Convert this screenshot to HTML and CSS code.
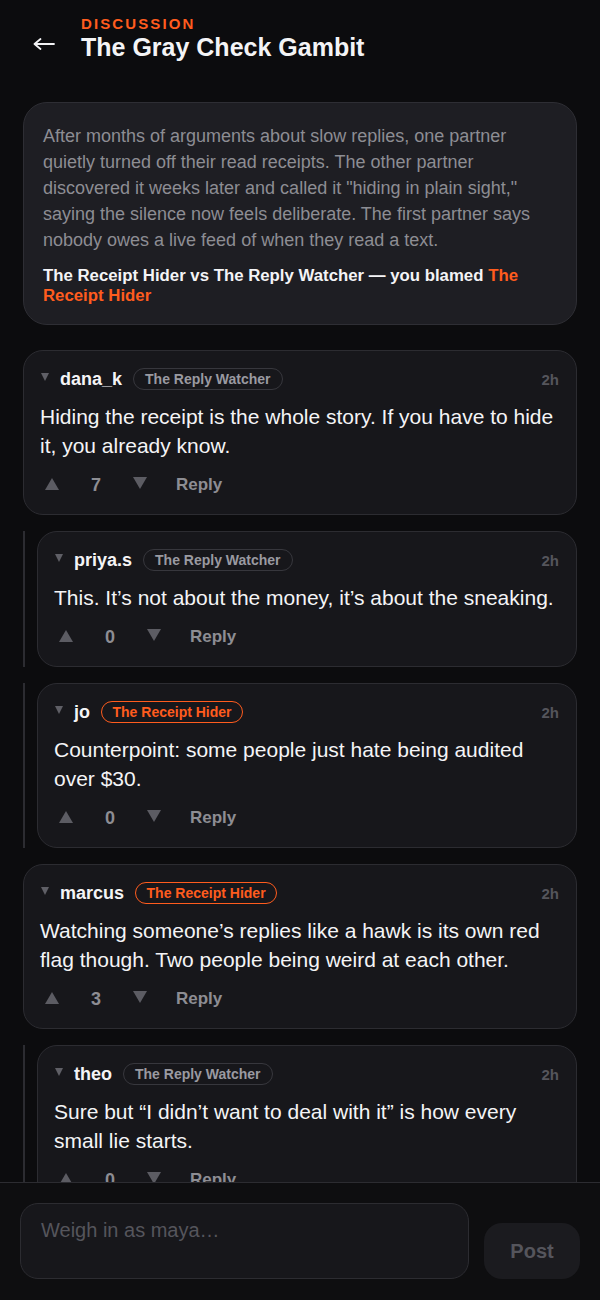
FILE: index.html
```html
<!DOCTYPE html>
<html lang="en">
<head>
<meta charset="utf-8">
<title>The Gray Check Gambit</title>
<link rel="stylesheet" href="styles.css">
</head>
<body>
<header class="top">
  <button class="back" aria-label="Back">
    <svg width="24" height="24" viewBox="0 0 24 24"><path d="M2.5 12 H22 M8.5 7 L2.5 12 L8.5 17" fill="none" stroke="#f2f2f4" stroke-width="1.8" stroke-linecap="round" stroke-linejoin="round"/></svg>
  </button>
  <div class="titles">
    <div class="eyebrow">DISCUSSION</div>
    <h1 class="title">The Gray Check Gambit</h1>
  </div>
</header>

<main class="feed">
  <section class="context">
    <p class="story">After months of arguments about slow replies, one partner quietly turned off their read receipts. The other partner discovered it weeks later and called it "hiding in plain sight," saying the silence now feels deliberate. The first partner says nobody owes a live feed of when they read a text.</p>
    <p class="verdict">The Receipt Hider vs The Reply Watcher — you blamed <span class="accent">The Receipt Hider</span></p>
  </section>

  <article class="comment">
    <div class="c-head">
      <span class="caret"></span>
      <span class="user">dana_k</span>
      <span class="badge">The Reply Watcher</span>
      <span class="time">2h</span>
    </div>
    <p class="c-body">Hiding the receipt is the whole story. If you have to hide it, you already know.</p>
    <div class="actions">
      <svg class="up" width="14" height="12" viewBox="0 0 14 12"><polygon points="7,0 14,12 0,12" /></svg>
      <span class="count">7</span>
      <svg class="down" width="14" height="12" viewBox="0 0 14 12"><polygon points="0,0 14,0 7,12" /></svg>
      <span class="reply">Reply</span>
    </div>
  </article>

  <div class="thread">
    <article class="comment">
      <div class="c-head">
        <span class="caret"></span>
        <span class="user">priya.s</span>
        <span class="badge">The Reply Watcher</span>
        <span class="time">2h</span>
      </div>
      <p class="c-body">This. It’s not about the money, it’s about the sneaking.</p>
      <div class="actions">
        <svg class="up" width="14" height="12" viewBox="0 0 14 12"><polygon points="7,0 14,12 0,12" /></svg>
        <span class="count">0</span>
        <svg class="down" width="14" height="12" viewBox="0 0 14 12"><polygon points="0,0 14,0 7,12" /></svg>
        <span class="reply">Reply</span>
      </div>
    </article>
  </div>

  <div class="thread">
    <article class="comment">
      <div class="c-head">
        <span class="caret"></span>
        <span class="user">jo</span>
        <span class="badge badge-hot">The Receipt Hider</span>
        <span class="time">2h</span>
      </div>
      <p class="c-body">Counterpoint: some people just hate being audited over $30.</p>
      <div class="actions">
        <svg class="up" width="14" height="12" viewBox="0 0 14 12"><polygon points="7,0 14,12 0,12" /></svg>
        <span class="count">0</span>
        <svg class="down" width="14" height="12" viewBox="0 0 14 12"><polygon points="0,0 14,0 7,12" /></svg>
        <span class="reply">Reply</span>
      </div>
    </article>
  </div>

  <article class="comment">
    <div class="c-head">
      <span class="caret"></span>
      <span class="user">marcus</span>
      <span class="badge badge-hot">The Receipt Hider</span>
      <span class="time">2h</span>
    </div>
    <p class="c-body">Watching someone’s replies like a hawk is its own red flag though. Two people being weird at each other.</p>
    <div class="actions">
      <svg class="up" width="14" height="12" viewBox="0 0 14 12"><polygon points="7,0 14,12 0,12" /></svg>
      <span class="count">3</span>
      <svg class="down" width="14" height="12" viewBox="0 0 14 12"><polygon points="0,0 14,0 7,12" /></svg>
      <span class="reply">Reply</span>
    </div>
  </article>

  <div class="thread">
    <article class="comment">
      <div class="c-head">
        <span class="caret"></span>
        <span class="user">theo</span>
        <span class="badge">The Reply Watcher</span>
        <span class="time">2h</span>
      </div>
      <p class="c-body">Sure but “I didn’t want to deal with it” is how every small lie starts.</p>
      <div class="actions">
        <svg class="up" width="14" height="12" viewBox="0 0 14 12"><polygon points="7,0 14,12 0,12" /></svg>
        <span class="count">0</span>
        <svg class="down" width="14" height="12" viewBox="0 0 14 12"><polygon points="0,0 14,0 7,12" /></svg>
        <span class="reply">Reply</span>
      </div>
    </article>
  </div>
</main>

<footer class="composer">
  <div class="input">Weigh in as maya…</div>
  <button class="post">Post</button>
</footer>
</body>
</html>
```

FILE: styles.css
```css
* { box-sizing: border-box; }

html, body {
  margin: 0;
  padding: 0;
  background: #0c0c0e;
  color: #f2f2f4;
  font-family: "Liberation Sans", Arial, sans-serif;
}

body {
  height: 1300px;
  overflow: hidden;
}

.top {
  display: flex;
  align-items: flex-start;
  padding: 14px 24px 0 32px;
}

.back {
  background: none;
  border: 0;
  padding: 0;
  width: 24px;
  height: 24px;
  margin-top: 18px;
  margin-right: 25px;
  display: flex;
}

.titles {
  display: flex;
  flex-direction: column;
}

.eyebrow {
  font-size: 15px;
  line-height: 18px;
  font-weight: 700;
  letter-spacing: 2.1px;
  color: #ff5c1e;
  margin-top: 1px;
}

.title {
  margin: 0;
  font-size: 25px;
  line-height: 28px;
  font-weight: 700;
  color: #f4f4f6;
}

.feed {
  display: flex;
  flex-direction: column;
  gap: 16px;
  padding: 41px 23px 0;
}

.context {
  background: #1e1e23;
  border: 1px solid #2e2e34;
  border-radius: 24px;
  padding: 20px 20px 18px 19px;
  margin-bottom: 9px;
}

.story {
  margin: 0;
  font-size: 18px;
  line-height: 26px;
  color: #8d8d93;
}

.verdict {
  margin: 13px 0 0;
  font-size: 16.8px;
  line-height: 20px;
  font-weight: 700;
  color: #f4f4f6;
}

.accent { color: #ff5c1e; }

.thread {
  border-left: 2px solid #2c2c31;
  padding-left: 12px;
}

.comment {
  background: #17171b;
  border: 1px solid #2c2c31;
  border-radius: 20px;
  padding: 16px 17px 16px 16px;
}

.c-head {
  display: flex;
  align-items: center;
  height: 24px;
}

.caret {
  width: 0;
  height: 0;
  border-left: 4.5px solid transparent;
  border-right: 4.5px solid transparent;
  border-top: 8px solid #5f5f66;
  margin: 0 11px 4px 1px;
}

.user {
  font-size: 18px;
  font-weight: 700;
  color: #f4f4f6;
  margin-right: 11px;
}

.badge {
  font-size: 14px;
  font-weight: 700;
  line-height: 20px;
  color: #9a9aa1;
  border: 1px solid #37373d;
  background: transparent;
  border-radius: 999px;
  padding: 0 11px;
}

.badge-hot {
  color: #ff5c1e;
  border: 1.5px solid #ff5c1e;
  padding: 0 10.5px;
}

.time {
  margin-left: auto;
  font-size: 15px;
  font-weight: 700;
  color: #55555c;
}

.c-body {
  margin: 11px 0 0;
  font-size: 21px;
  line-height: 29px;
  color: #f4f4f6;
}

.actions {
  display: flex;
  align-items: center;
  height: 26px;
  margin-top: 12px;
  padding-left: 5px;
}

.up, .down { fill: #5c5c63; }

.count {
  width: 28px;
  margin: 0 23px 0 23px;
  text-align: center;
  font-size: 18px;
  font-weight: 700;
  color: #8d8d93;
}

.up { margin-top: -2px; }
.down { margin-top: -4px; }

.reply {
  margin-left: 29px;
  font-size: 17px;
  font-weight: 700;
  color: #8d8d93;
}

.composer {
  position: fixed;
  left: 0;
  right: 0;
  bottom: 0;
  height: 118px;
  background: #0e0e10;
  border-top: 1px solid #2c2c31;
  display: flex;
  align-items: flex-end;
  gap: 15px;
  padding: 0 20px 21px;
}

.input {
  flex: 1;
  height: 76px;
  background: #17171b;
  border: 1px solid #2c2c31;
  border-radius: 18px;
  padding: 13px 20px;
  font-size: 20px;
  line-height: 26px;
  color: #55555c;
}

.post {
  width: 96px;
  height: 56px;
  border: 0;
  border-radius: 18px;
  background: #1b1b1f;
  font-family: "Liberation Sans", Arial, sans-serif;
  font-size: 20px;
  font-weight: 700;
  color: #55555c;
}
```
